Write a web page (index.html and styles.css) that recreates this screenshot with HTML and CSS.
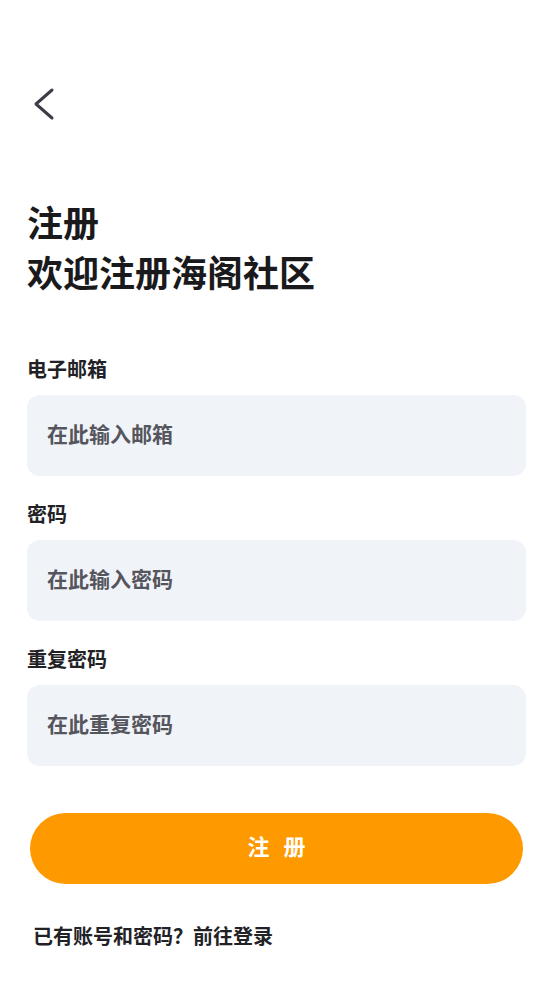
FILE: index.html
```html
<!DOCTYPE html>
<html lang="zh-CN">
<head>
<meta charset="utf-8">
<title>注册</title>
<link rel="stylesheet" href="styles.css">
</head>
<body>
<div class="page">
  <header class="top">
    <svg class="back" width="32" height="40" viewBox="0 0 32 40" aria-label="返回">
      <polyline points="25,6 9,20 25,34" fill="none" stroke="#3d3d47" stroke-width="3" stroke-linecap="round" stroke-linejoin="round"/>
    </svg>
  </header>
  <h1 class="title">注册<br>欢迎注册海阁社区</h1>
  <form class="form">
    <div class="field">
      <label class="label">电子邮箱</label>
      <input class="input" type="text" placeholder="在此输入邮箱">
    </div>
    <div class="field">
      <label class="label">密码</label>
      <input class="input" type="password" placeholder="在此输入密码">
    </div>
    <div class="field">
      <label class="label">重复密码</label>
      <input class="input" type="password" placeholder="在此重复密码">
    </div>
    <button class="submit" type="button">注册</button>
  </form>
  <p class="footer">已有账号和密码？前往登录</p>
</div>
</body>
</html>
```
FILE: styles.css
```css
html, body {
  margin: 0;
  padding: 0;
  background: #ffffff;
}
body {
  font-family: "Noto Sans CJK SC", "Noto Sans", sans-serif;
  color: #1c1c1e;
}
.page {
  padding: 0 28px 0 27px;
}
.top {
  padding-top: 84px;
  height: 40px;
}
.back {
  display: block;
}
.title {
  margin: 72px 0 0;
  font-size: 36px;
  line-height: 50px;
  font-weight: 700;
  color: #1a1a1c;
}
.form {
  margin-top: 59px;
  display: flex;
  flex-direction: column;
}
.field {
  display: flex;
  flex-direction: column;
  margin-bottom: 24px;
}
.label {
  font-size: 20px;
  line-height: 28px;
  font-weight: 700;
  color: #222226;
  margin-bottom: 12px;
}
.input {
  box-sizing: border-box;
  height: 81px;
  border: none;
  outline: none;
  border-radius: 13px;
  background: #f0f3f8;
  padding: 0 20px 6px;
  font-family: inherit;
  font-size: 21px;
  font-weight: 700;
  color: #333;
}
.input::placeholder {
  color: #55555d;
  opacity: 1;
}
.submit {
  margin: 23px 3px 0;
  height: 71px;
  border: none;
  border-radius: 36px;
  background: #ff9900;
  color: #ffffff;
  font-family: inherit;
  font-size: 22px;
  font-weight: 700;
  letter-spacing: 14px;
  padding: 0 0 8px 14px;
}
.footer {
  margin: 38px 0 0 6px;
  font-size: 20px;
  line-height: 28px;
  font-weight: 700;
  color: #222226;
}
```
